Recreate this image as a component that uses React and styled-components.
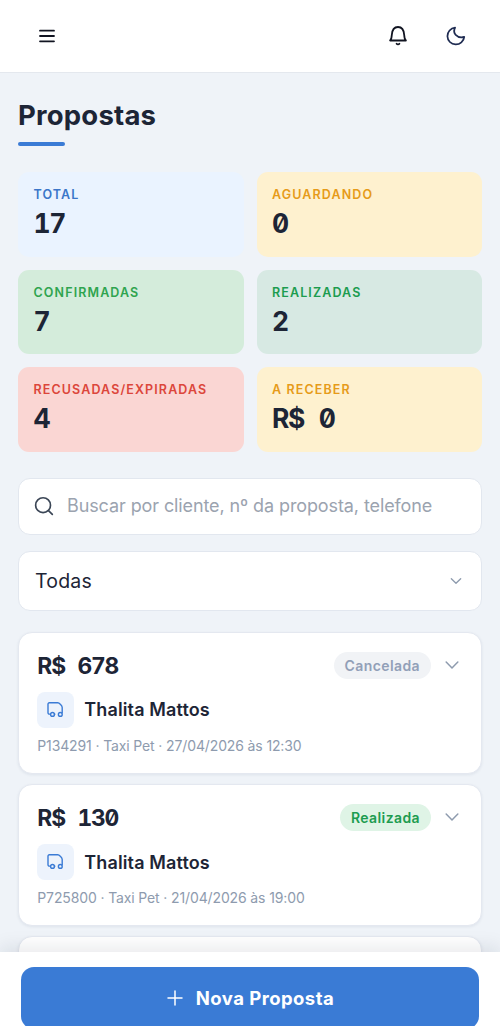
import React from "react"
import styled, { createGlobalStyle } from "styled-components"

const GlobalStyle = createGlobalStyle`
  * {
    box-sizing: border-box;
  }

  body {
    margin: 0;
    overflow: hidden;
    background: #eff3f8;
    color: #1d2536;
    font-family: Inter, "Liberation Sans", sans-serif;
  }

  button, input {
    font-family: inherit;
  }
`

const Page = styled.div`
  display: flex;
  flex-direction: column;
  height: 100vh;
`

const Header = styled.header`
  flex: none;
  display: flex;
  align-items: center;
  gap: 28px;
  height: 73px;
  padding: 0 29px 1px 32px;
  background: #fff;
  border-bottom: 1px solid #e4e8ee;
`

const IconButton = styled.button`
  display: flex;
  align-items: center;
  justify-content: center;
  width: 30px;
  height: 30px;
  padding: 0;
  border: none;
  background: none;
  color: ${props => props.color || "#111421"};
  cursor: pointer;

  &:first-child {
    margin-right: auto;
  }
`

const Main = styled.main`
  flex: 1;
  min-height: 0;
  overflow: hidden;
  padding: 25px 18px 0;
`

const Title = styled.h1`
  display: flex;
  flex-direction: column;
  gap: 9px;
  margin: 0 0 26px;
  font-size: 27.5px;
  font-weight: 700;
  line-height: 35px;
  letter-spacing: 0.2px;

  &::after {
    content: "";
    width: 47px;
    height: 4px;
    border-radius: 2px;
    background: #3a7bd5;
  }
`

const Stats = styled.section`
  display: grid;
  grid-template-columns: 1fr 1fr;
  gap: 13px;
  margin-bottom: 26.5px;
`

const Stat = styled.div`
  height: 84.5px;
  padding: 14px 15.5px;
  border-radius: 11px;
  background: ${props => props.$bg};
`

const StatLabel = styled.div`
  color: ${props => props.color};
  font-size: 12.5px;
  font-weight: 600;
  line-height: 17px;
  letter-spacing: 1.12px;
  white-space: nowrap;
`

const Amount = styled.div`
  font-size: ${props => (props.$small ? "22.8px" : "26.5px")};
  font-weight: 700;
  font-feature-settings: "tnum", "zero";
  line-height: ${props => (props.$small ? "28px" : "36px")};
  letter-spacing: -0.05em;
  word-spacing: 0.33em;
  white-space: pre;
`

const StatValue = styled(Amount)`
  margin-top: 2px;
`

const Field = styled.label`
  display: flex;
  align-items: center;
  height: ${props => props.$height};
  padding: 0 17px 0 16px;
  border: 1.5px solid #e2e7ef;
  border-radius: 12px;
  background: #fff;
`

const SearchField = styled(Field)`
  gap: 13px;
  margin-bottom: 16px;
  padding-left: 14px;
  padding-right: 8px;
  color: #3b4656;
`

const SearchInput = styled.input`
  flex: 1;
  min-width: 0;
  padding: 0 0 2px;
  border: none;
  outline: none;
  background: none;
  font-size: 18px;
  letter-spacing: -0.1px;

  &::placeholder {
    color: #9ba3af;
  }
`

const FilterField = styled(Field)`
  justify-content: space-between;
  margin-bottom: 21px;
  font-size: 19.5px;
  letter-spacing: 0.2px;

  svg {
    color: #8e9bae;
  }
`

const Cards = styled.section`
  display: flex;
  flex-direction: column;
  gap: 10.3px;
`

const Card = styled.article`
  flex: none;
  height: 142px;
  padding: 18px 19px 18px 18.3px;
  border: 1.5px solid #e4e8f0;
  border-radius: 14px;
  background: #fff;
  box-shadow: 0 1px 3px rgba(30, 50, 90, 0.08);
`

const CardTop = styled.div`
  display: flex;
  align-items: center;
  height: 29px;
  color: #8e9bae;

  ${Amount} {
    margin-right: auto;
    padding-top: 1.5px;
    color: #1d2536;
  }
`

const Badge = styled.span`
  display: flex;
  align-items: center;
  height: 27px;
  margin-right: 11px;
  padding: 0 11px;
  border-radius: 14px;
  background: ${props => (props.$done ? "#dff4e6" : "#f1f3f6")};
  color: ${props => (props.$done ? "#1d9c50" : "#92a0b8")};
  font-size: 14px;
  font-weight: 600;
  letter-spacing: 0.4px;
`

const Client = styled.div`
  display: flex;
  align-items: center;
  gap: 10.5px;
  margin-top: 12px;
  font-size: 18px;
  font-weight: 600;
  letter-spacing: 0.13px;
`

const ServiceIcon = styled.span`
  display: flex;
  align-items: center;
  justify-content: center;
  width: 36.5px;
  height: 36.5px;
  border-radius: 8px;
  background: #edf3fc;
  color: #3a7bd5;
`

const Details = styled.div`
  margin-top: 7.5px;
  color: #8e9bae;
  font-size: 14px;
  line-height: 20px;
  letter-spacing: -0.13px;
  white-space: nowrap;
`

const Footer = styled.footer`
  flex: none;
  position: relative;
  height: 74px;
  padding: 15px 21px 0;
  background: #fff;
  box-shadow: 0 -4px 18px rgba(20, 30, 50, 0.1);
`

const NewButton = styled.button`
  display: flex;
  align-items: center;
  justify-content: center;
  gap: 12px;
  width: 100%;
  height: 62px;
  border: none;
  border-radius: 13px;
  background: #3a7bd5;
  color: #fff;
  font-size: 18.5px;
  font-weight: 700;
  letter-spacing: 0.45px;
`

const Svg = ({ size = 24, stroke = 2, box = 24, children }) => (
  <svg
    width={size}
    height={size}
    viewBox={`0 0 ${box} ${box}`}
    fill="none"
    stroke="currentColor"
    strokeWidth={stroke}
    strokeLinecap="round"
    strokeLinejoin="round"
    style={{ flex: "none" }}
  >
    {children}
  </svg>
)

const Chevron = ({ size, stroke = 1.8 }) => (
  <Svg size={size} stroke={stroke}>
    <path d="m5 8.500 7 7 7-7" />
  </Svg>
)

const stats = [
  { label: "TOTAL", value: "17", bg: "#eaf3ff", color: "#3b76c9" },
  { label: "AGUARDANDO", value: "0", bg: "#fef1cf", color: "#e69b19" },
  { label: "CONFIRMADAS", value: "7", bg: "#d4ecdb", color: "#2fa44f" },
  { label: "REALIZADAS", value: "2", bg: "#d7e9e3", color: "#1c9c4f" },
  { label: "RECUSADAS/EXPIRADAS", value: "4", bg: "#fad6d3", color: "#dc463b" },
  { label: "A RECEBER", value: "R$ 0", bg: "#fef1cf", color: "#e69b19" },
]

const proposals = [
  {
    price: "R$ 678",
    status: "Cancelada",
    client: "Thalita Mattos",
    details: "P134291 · Taxi Pet · 27/04/2026 às 12:30",
  },
  {
    price: "R$ 130",
    status: "Realizada",
    client: "Thalita Mattos",
    details: "P725800 · Taxi Pet · 21/04/2026 às 19:00",
  },
]

const Proposal = ({ price, status, client, details }) => (
  <Card>
    <CardTop>
      <Amount $small>{price}</Amount>
      <Badge $done={status === "Realizada"}>{status}</Badge>
      <Chevron size={20} />
    </CardTop>
    <Client>
      <ServiceIcon>
        <Svg size={18} box={18} stroke={1.4}>
          <path d="M3.200 13.100H2.400A1.400 1.400 0 0 1 1 11.700V3.100a1.300 1.300 0 0 1 1.300-1.300h8.400c1.600 0 4.500 3 4.500 4.600v5.300M7.300 13.100h.6" />
          <circle cx="5.500" cy="13.400" r="1.900" />
          <circle cx="13.300" cy="13.400" r="1.900" />
        </Svg>
      </ServiceIcon>
      {client}
    </Client>
    <Details>{details}</Details>
  </Card>
)

const App = () => (
  <>
    <GlobalStyle />
    <Page>
      <Header>
        <IconButton aria-label="Menu">
          <Svg size={20} box={20} stroke={1.8}>
            <path d="M3 4.700h14M3 10h14M3 15.300h14" />
          </Svg>
        </IconButton>
        <IconButton aria-label="Notificações">
          <Svg size={22} box={22} stroke={1.8}>
            <path d="M3.100 15.500h15.800c-1.200-1-1.500-2.300-1.700-5.500C16.900 5.100 15.200 2 11 2S5.100 5.100 4.800 10c-.2 3.200-.5 4.500-1.700 5.500ZM9.600 18.700c.7.900 2.100.9 2.800 0" />
          </Svg>
        </IconButton>
        <IconButton aria-label="Tema escuro" color="#1f2c52">
          <Svg size={22} stroke={1.900}>
            <path d="M21 13A9.200 9.200 0 1 1 11 2.900c-1.500 3 -1.300 5.700.7 7.900 2.300 2.400 5.800 3.400 9.300 2.200Z" />
          </Svg>
        </IconButton>
      </Header>
      <Main>
        <Title>Propostas</Title>
        <Stats>
          {stats.map(stat => (
            <Stat key={stat.label} $bg={stat.bg}>
              <StatLabel color={stat.color}>{stat.label}</StatLabel>
              <StatValue>{stat.value}</StatValue>
            </Stat>
          ))}
        </Stats>
        <SearchField $height="56.5px">
          <Svg size={21} stroke={1.9}>
            <circle cx="11.500" cy="10.500" r="8.500" />
            <path d="m17.700 16.700 4.400 4.400" />
          </Svg>
          <SearchInput placeholder="Buscar por cliente, nº da proposta, telefone" />
        </SearchField>
        <FilterField $height="60px">
          Todas
          <Chevron size={16} stroke={2} />
        </FilterField>
        <Cards>
          {proposals.map(proposal => (
            <Proposal key={proposal.details} {...proposal} />
          ))}
          <Card />
        </Cards>
      </Main>
      <Footer>
        <NewButton>
          <Svg size={18} box={18} stroke={1.5}>
            <path d="M9 2v14M2 9h14" />
          </Svg>
          Nova Proposta
        </NewButton>
      </Footer>
    </Page>
  </>
)

export default App
